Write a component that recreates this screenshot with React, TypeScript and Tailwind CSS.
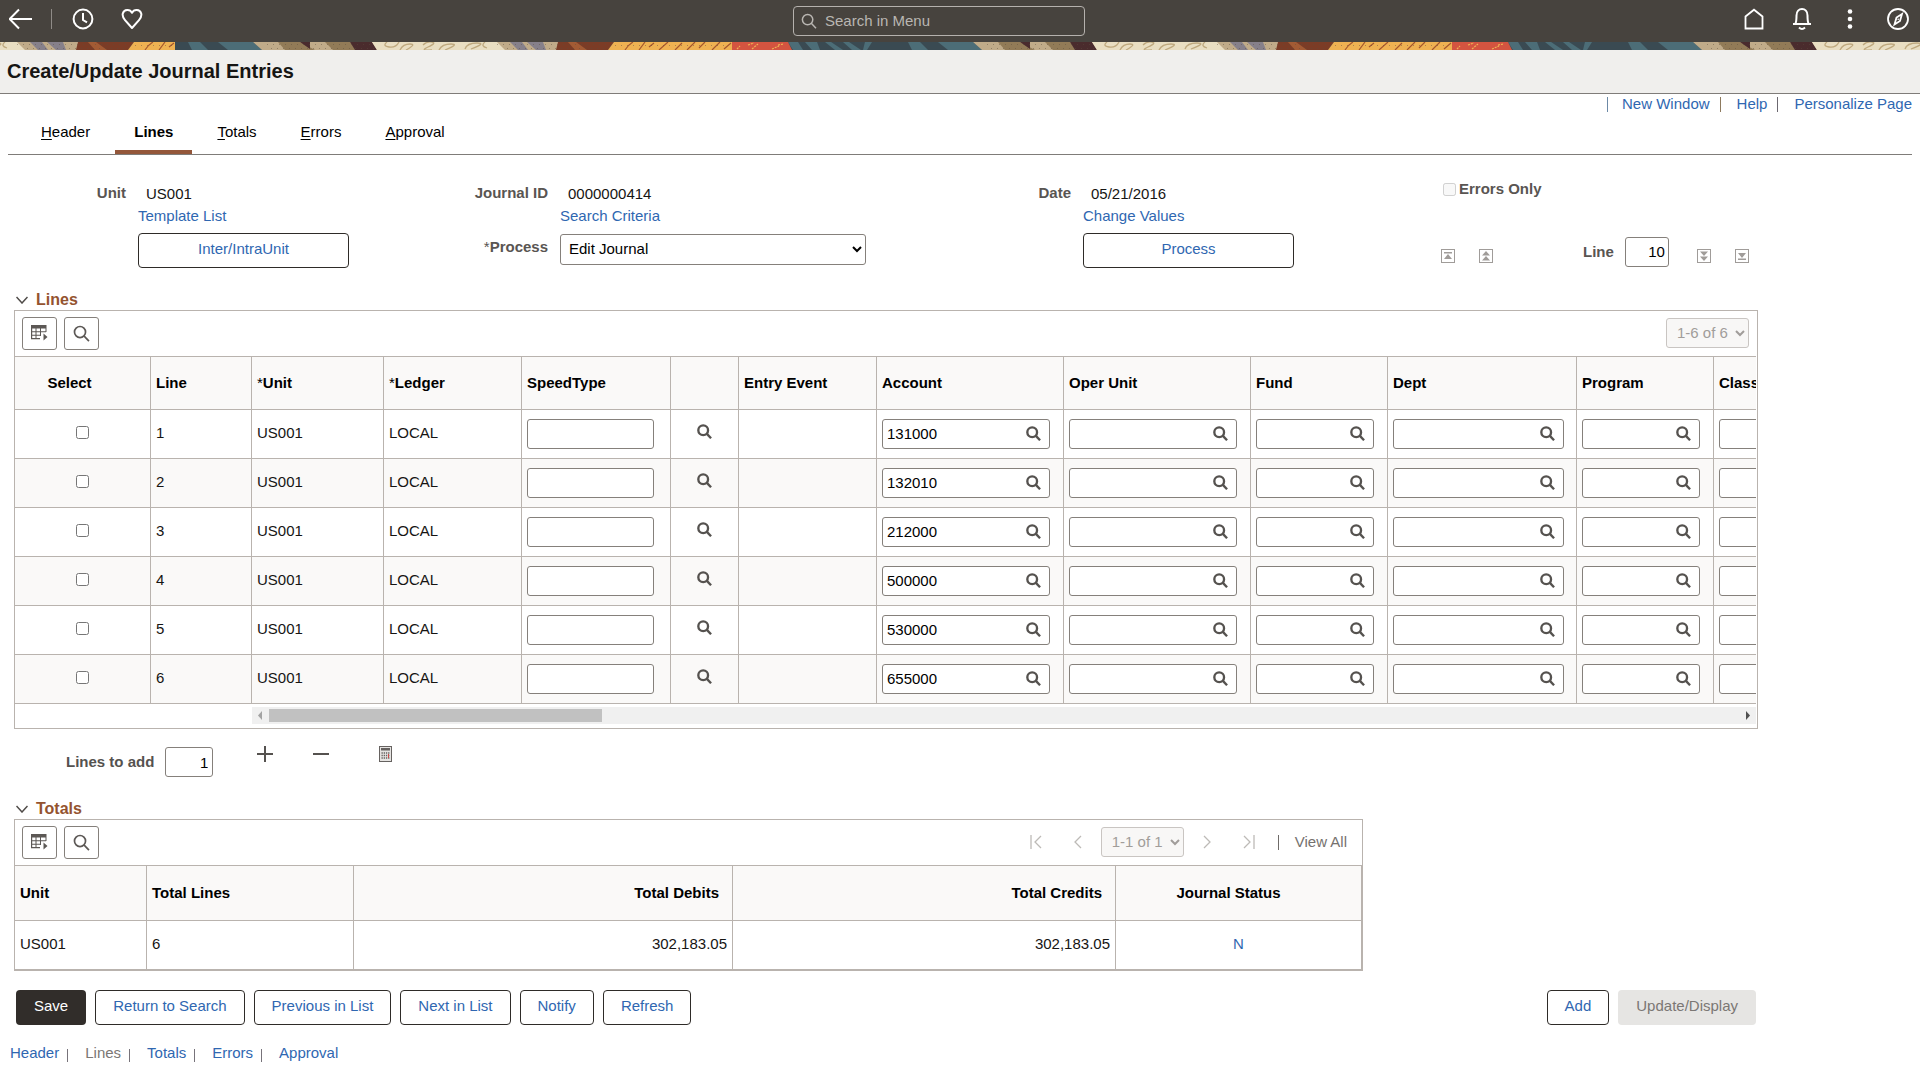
import { useState } from 'react';

const LINK = 'text-[#2f67b1] hover:underline';
const CELL = 'border-t border-r border-[#b9b3ae]';
const FIELD = 'rounded-[3px] border border-[#85807b] bg-white text-black';

const tabs = ['Header', 'Lines', 'Totals', 'Errors', 'Approval'];

const journalLines = [
  { line: 1, unit: 'US001', ledger: 'LOCAL', account: '131000' },
  { line: 2, unit: 'US001', ledger: 'LOCAL', account: '132010' },
  { line: 3, unit: 'US001', ledger: 'LOCAL', account: '212000' },
  { line: 4, unit: 'US001', ledger: 'LOCAL', account: '500000' },
  { line: 5, unit: 'US001', ledger: 'LOCAL', account: '530000' },
  { line: 6, unit: 'US001', ledger: 'LOCAL', account: '655000' },
];

const lookups = [
  { name: 'Account', width: 'w-[168px]' },
  { name: 'Oper Unit', width: 'w-[168px]' },
  { name: 'Fund', width: 'w-[118px]' },
  { name: 'Dept', width: 'w-[171px]' },
  { name: 'Program', width: 'w-[118px]' },
  { name: 'Class', width: 'w-[118px]' },
];

function Magnifier({ size = 16, stroke = 2 }: { size?: number; stroke?: number }) {
  return (
    <svg width={size} height={size} viewBox="0 0 16 16" fill="none" stroke="currentColor" strokeWidth={stroke}>
      <circle cx="6.6" cy="6.6" r="5.2" />
      <path d="M10.3 10.3 15 15.2" />
    </svg>
  );
}

function BannerTile({ id, x }: { id: string; x: number }) {
  return (
    <pattern id={id} x={x} y="0" width="720" height="8" patternUnits="userSpaceOnUse">
      <rect width="720" height="8" fill="#3a4a52" />
      <path fill="#4c6d77" d="M13 0h12l8 8H17zM43 0h35l9 8H53zM613 0h10l5 8h-10zM630 0h12l3 8h-8zM650 0h6l12 8h-8zM668 0h6l12 8h-9zM690 0h7l-5 8h-4z" />
      <path fill="#c0ab89" d="M78 0h130v8H87zM320 0h64v8h-56z" />
      <path fill="#927b57" d="M103 0h22l15 8h-30zM150 0h25l7 8h-24z" />
      <path fill="#4a2b2d" d="M125 0h10v7zM175 0h22l5 8h-22z" />
      <path fill="#e9dec2" d="M197 0h125l8 8H202z" />
      <path fill="#86808a" d="M335 0h12l6 8h-10zM352 0h16l3 8h-10z" />
      <path fill="#7b3c26" d="M383 0h56l-6 8h-52z" />
      <path fill="#a35b34" d="M393 0h8l11 8h-12z" />
      <path fill="#efb252" d="M439 0h118v8H433z" />
      <path fill="#d45440" d="M557 0h56l4 8h-60z" />
      <g fill="none" stroke="#bfa97f" strokeWidth="1.3">
        <path d="M212 0q-5 4 2 5t10-5M225 8q3-6 10-6t-4 6M248 3q4-4 9-3t-4 5 4 3M264 8q3-6 12-6t-6 6M290 7q2-6 12-6t-6 6M310 0q-5 4 2 6" />
      </g>
      <g fill="none" stroke="#a5562c" strokeWidth="1.2">
        <path d="M450 8q3-5 8-8M464 8l6-8M474 5l5-4M484 8l9-8M500 8l7-7M512 8l8-8M524 6l6-6M537 8l8-8M549 7l7-6" />
      </g>
      <g fill="none" stroke="#efb252" strokeWidth="1.2" strokeDasharray="2 1">
        <path d="M562 7l3-3M573 3l6-2M577 7l6-5M597 7l7-3M603 3l6-1" />
      </g>
      <g fill="none" stroke="#5b4b3c" strokeWidth="1" strokeDasharray="1 5" opacity="0.45">
        <path d="M92 2.5h105M96 6.5h104M322 2.5h112M332 6.5h100M440 3.5h112" />
      </g>
    </pattern>
  );
}

function Banner() {
  return (
    <div className="flex h-2">
      <svg width="175" height="8" className="shrink-0" aria-hidden="true">
        <defs>
          <BannerTile id="banner-start" x={-305} />
        </defs>
        <rect width="175" height="8" fill="url(#banner-start)" />
      </svg>
      <svg height="8" className="min-w-0 flex-1" aria-hidden="true">
        <defs>
          <BannerTile id="banner-repeat" x={0} />
        </defs>
        <rect width="100%" height="8" fill="url(#banner-repeat)" />
      </svg>
    </div>
  );
}

function TopBar() {
  return (
    <header className="flex h-[42px] items-center bg-[#47433e] text-white">
      <div className="flex flex-1 items-center pb-1 pl-[9px]">
        <button aria-label="Back">
          <svg width="24" height="22" viewBox="0 0 24 22" fill="none" stroke="currentColor" strokeWidth="2">
            <path d="M23 11H1M10 1.5.6 11l9.400 9.500" />
          </svg>
        </button>
        <span className="ml-[18px] h-5 w-px bg-[#8f8b87]" />
        <button aria-label="Recently visited" className="ml-5">
          <svg width="22" height="22" viewBox="0 0 22 22" fill="none" stroke="currentColor" strokeWidth="2">
            <circle cx="11" cy="11" r="9.4" />
            <path d="M11 5v7l4 2.4" />
          </svg>
        </button>
        <button aria-label="Favorites" className="ml-[27px]">
          <svg width="22" height="22" viewBox="0 0 22 22" fill="none" stroke="currentColor" strokeWidth="2" strokeLinejoin="round">
            <path d="M11 4.8C9 .8 3 1 1.8 5.5c-.7 2.7.4 4.5 2.2 6.6l7 7.9 7-7.9c1.800-2.100 2.900-3.900 2.200-6.600C19 1 13 .8 11 4.800z" />
          </svg>
        </button>
      </div>
      <label className="mr-10 flex h-[30px] w-[292px] items-center gap-2 rounded-[4px] border border-[#b5b1ad] px-[7px] text-[#b9b6b2]">
        <Magnifier size={16} stroke={1.5} />
        <input
          aria-label="Search in Menu"
          placeholder="Search in Menu"
          className="min-w-0 flex-1 bg-transparent text-[15px] outline-none placeholder:text-[#b9b6b2]"
        />
      </label>
      <div className="flex flex-1 items-center justify-end gap-[26px] pr-[11px] pb-1">
        <button aria-label="Home">
          <svg width="22" height="22" viewBox="0 0 22 22" fill="none" stroke="currentColor" strokeWidth="1.800">
            <path d="M2.500 20.500V8.500L11 1.700l8.500 6.800v12z" />
          </svg>
        </button>
        <button aria-label="Notifications">
          <svg width="22" height="24" viewBox="0 0 22 24" fill="none" stroke="currentColor" strokeWidth="2">
            <path d="M2 17h18M4.500 16.500c1-2 1-4 1-8 0-4 2.500-6.500 5.500-6.500s5.500 2.500 5.500 6.500c0 4 0 6 1 8M8 20.500q3 3 6 0" />
          </svg>
        </button>
        <button aria-label="Actions">
          <svg width="22" height="22" viewBox="0 0 22 22" fill="currentColor">
            <circle cx="11" cy="3.500" r="2.300" />
            <circle cx="11" cy="11" r="2.300" />
            <circle cx="11" cy="18.500" r="2.300" />
          </svg>
        </button>
        <button aria-label="NavBar">
          <svg width="22" height="24" viewBox="0 0 22 24" fill="none" stroke="currentColor" strokeWidth="1.800">
            <circle cx="11" cy="12" r="10" />
            <path d="m15 7-2 7-5.500 3.500 2-7z" />
            <circle cx="11.200" cy="12.200" r="0.800" fill="currentColor" stroke="none" />
          </svg>
        </button>
      </div>
    </header>
  );
}

function OutlineButton({ children, className = '' }: { children: string; className?: string }) {
  return (
    <button className={`h-[35px] rounded-[4px] border border-[#2e2b28] bg-white px-[17px] pb-1 text-[#2f67b1] ${className}`}>
      {children}
    </button>
  );
}

// Small framed arrows that jump between chunks of journal lines
function JumpButton({ label, d }: { label: string; d: string }) {
  return (
    <button aria-label={label} className="pt-2 text-[#a09c99]">
      <svg width="14" height="14" viewBox="0 0 14 14">
        <rect x="0.5" y="0.5" width="13" height="13" fill="none" stroke="currentColor" />
        <path d={d} fill="currentColor" />
      </svg>
    </button>
  );
}

function SectionTitle({ children }: { children: string }) {
  return (
    <h2 className="flex h-5 items-center text-base font-bold text-[#94532f]">
      <button aria-label={`Collapse ${children}`} className="mr-2 ml-0.5 text-[#4f4b48]">
        <svg width="12" height="8" viewBox="0 0 12 8" fill="none" stroke="currentColor" strokeWidth="1.500">
          <path d="M.5 1 6 7l5.500-6" />
        </svg>
      </button>
      {children}
    </h2>
  );
}

function GridTools() {
  const box = 'flex h-[33px] w-[35px] items-center justify-center rounded-[3px] border border-[#85807b] text-[#5c5855]';
  return (
    <div className="flex gap-[7px]">
      <button aria-label="Grid action menu" className={box}>
        <svg width="17" height="16" viewBox="0 0 17 16" fill="currentColor">
          <path d="M0 0h15.500v7h-1V3.500H1.200V13H9v1.200H0z" />
          <path d="M1 6.300h14v1H1zM1 9.800h9v1H1zM4.500 3h1v11h-1zM9 3h1v8H9zM12.500 8.500v7l4-3.500z" />
        </svg>
      </button>
      <button aria-label="Find" className={box}>
        <Magnifier size={17} stroke={1.600} />
      </button>
    </div>
  );
}

function LookupField({ label, value, width }: { label: string; value: string; width: string }) {
  return (
    <div className={`flex h-[30px] items-center ${FIELD} ${width}`}>
      <input aria-label={label} defaultValue={value} className="h-full min-w-0 flex-1 pb-px pl-1 outline-none" />
      <button aria-label={`Look up ${label}`} className="px-2 pb-0.5 text-[#55524f]">
        <Magnifier size={15} stroke={2.500} />
      </button>
    </div>
  );
}

function PagerSelect({ label, text }: { label: string; text: string }) {
  return (
    <select disabled aria-label={label} className="h-[30px] w-[83px] rounded-[3px] border border-[#c9c5c2] bg-[#f8f7f6] pb-0.5 pl-1.5 text-[#a19d9a]">
      <option>{text}</option>
    </select>
  );
}

function PagerButton({ label, d }: { label: string; d: string }) {
  return (
    <button disabled aria-label={label} className="flex w-[38px] justify-center text-[#bdbab7]">
      <svg width="12" height="14" viewBox="0 0 12 14" fill="none" stroke="currentColor" strokeWidth="1.300">
        <path d={d} />
      </svg>
    </button>
  );
}

function JournalFields() {
  const block = 'grid grid-cols-[126px_max-content] grid-rows-[22px_28px_35px] gap-x-3';
  const label = 'text-right leading-5 font-bold text-[#595552]';
  return (
    <section className="grid grid-cols-[422px_523px_496px_1fr] pt-7">
      <div className={block}>
        <span className={label}>Unit</span>
        <span className="pl-2 leading-[22px]">US001</span>
        <a href="#template" className={`col-start-2 leading-[22px] ${LINK}`}>Template List</a>
        <OutlineButton className="col-start-2 w-[211px]">Inter/IntraUnit</OutlineButton>
      </div>
      <div className={block}>
        <span className={label}>Journal ID</span>
        <span className="pl-2 leading-[22px]">0000000414</span>
        <a href="#criteria" className={`col-start-2 leading-[22px] ${LINK}`}>Search Criteria</a>
        <label htmlFor="process" className="text-right leading-7 font-bold text-[#595552]">
          <span className="font-normal">*</span>Process
        </label>
        <select id="process" className={`mt-px h-[31px] w-[306px] pb-0.5 pl-1 ${FIELD}`}>
          <option>Edit Journal</option>
        </select>
      </div>
      <div className={block}>
        <span className={label}>Date</span>
        <span className="pl-2 leading-[22px]">05/21/2016</span>
        <a href="#values" className={`col-start-2 leading-[22px] ${LINK}`}>Change Values</a>
        <OutlineButton className="col-start-2 w-[211px]">Process</OutlineButton>
      </div>
      <div className="grid grid-rows-[50px_35px] font-bold text-[#595552]">
        <label className="flex h-3 items-center gap-[3px] pl-0.5">
          <input type="checkbox" disabled className="size-[13px]" />
          Errors Only
        </label>
        <div className="flex items-center pt-0.5">
          <JumpButton label="First line" d="M3 3h8v1.500H3zM7 5l4 5H3z" />
          <span className="w-6" />
          <JumpButton label="Previous lines" d="M7 2l4 4.500H3zM7 7l4 4.500H3z" />
          <label htmlFor="goto-line" className="ml-[90px]">Line</label>
          <input id="goto-line" defaultValue="10" className={`mr-7 ml-[11px] h-[30px] w-11 px-[3px] text-right font-normal ${FIELD}`} />
          <JumpButton label="Next lines" d="M3 2.500h8L7 7zM3 7.500h8L7 12z" />
          <span className="w-6" />
          <JumpButton label="Last line" d="M3 4h8L7 9zM3 9.500h8V11H3z" />
        </div>
      </div>
    </section>
  );
}

function LinesGrid() {
  return (
    <div className="border border-[#b9b3ae] pr-px pb-1">
      <div className="flex h-[45px] items-center justify-between pr-[7px] pb-px pl-[7px]">
        <GridTools />
        <PagerSelect label="Line range" text="1-6 of 6" />
      </div>
      <div className="overflow-hidden">
        <table className="w-[1842px] table-fixed border-separate border-spacing-0">
          <colgroup>
            <col className="w-[136px]" />
            <col className="w-[101px]" />
            <col className="w-[132px]" />
            <col className="w-[138px]" />
            <col className="w-[149px]" />
            <col className="w-[68px]" />
            <col className="w-[138px]" />
            <col className="w-[187px]" />
            <col className="w-[187px]" />
            <col className="w-[137px]" />
            <col className="w-[189px]" />
            <col className="w-[137px]" />
            <col className="w-[143px]" />
          </colgroup>
          <thead className="bg-[#faf9f8] text-left text-black">
            <tr className="h-[53px]">
              <th className={`pr-[26px] text-center ${CELL}`}>Select</th>
              <th className={`pl-[5px] ${CELL}`}>Line</th>
              <th className={`pl-[5px] ${CELL}`}><span className="font-normal">*</span>Unit</th>
              <th className={`pl-[5px] ${CELL}`}><span className="font-normal">*</span>Ledger</th>
              <th className={`pl-[5px] ${CELL}`}>SpeedType</th>
              <th className={CELL} />
              <th className={`pl-[5px] ${CELL}`}>Entry Event</th>
              {lookups.map((f) => (
                <th key={f.name} className={`pl-[5px] ${CELL}`}>{f.name}</th>
              ))}
            </tr>
          </thead>
          <tbody className="[&>tr:last-child>td]:border-b">
            {journalLines.map((row) => (
              <tr key={row.line} className="h-[49px] even:bg-[#faf9f8] last:h-[50px]">
                <td className={`pb-[3px] text-center ${CELL}`}>
                  <input type="checkbox" aria-label={`Select line ${row.line}`} className="mx-auto block size-[13px]" />
                </td>
                <td className={`pb-[3px] pl-[5px] ${CELL}`}>{row.line}</td>
                <td className={`pb-[3px] pl-[5px] ${CELL}`}>{row.unit}</td>
                <td className={`pb-[3px] pl-[5px] ${CELL}`}>{row.ledger}</td>
                <td className={`pl-[5px] ${CELL}`}>
                  <input aria-label="SpeedType" className={`block h-[30px] w-[127px] px-1 ${FIELD}`} />
                </td>
                <td className={`pb-1.5 ${CELL}`}>
                  <button aria-label="Look up SpeedType" className="mx-auto block text-[#55524f]">
                    <Magnifier size={15} stroke={2.500} />
                  </button>
                </td>
                <td className={CELL} />
                {lookups.map((f) => (
                  <td key={f.name} className={`pl-[5px] ${CELL}`}>
                    <LookupField label={f.name} value={f.name === 'Account' ? row.account : ''} width={f.width} />
                  </td>
                ))}
              </tr>
            ))}
          </tbody>
        </table>
      </div>
      <div className="mt-[3px] ml-[237px] flex h-[17px] items-center bg-[#f0f0f0]">
        <svg width="17" height="9" viewBox="0 0 17 9" className="shrink-0">
          <path d="M10 0v9L6 4.500z" fill="#a3a3a3" />
        </svg>
        <div className="h-[13px] w-[333px] bg-[#c1c1c1]" />
        <svg width="17" height="9" viewBox="0 0 17 9" className="ml-auto shrink-0">
          <path d="M7 0v9l4-4.500z" fill="#505050" />
        </svg>
      </div>
    </div>
  );
}

function LinesToAdd() {
  return (
    <div className="mt-[18px] flex h-[30px] items-center pl-[52px] text-[#55524f]">
      <label htmlFor="lines-to-add" className="font-bold">Lines to add</label>
      <input id="lines-to-add" defaultValue="1" className={`ml-[11px] h-[30px] w-12 px-1 text-right ${FIELD}`} />
      <div className="flex items-center pb-4">
        <button aria-label="Insert lines" className="ml-11">
          <svg width="16" height="16" viewBox="0 0 16 16" stroke="currentColor" strokeWidth="2">
            <path d="M8 0v16M0 8h16" />
          </svg>
        </button>
        <button aria-label="Delete lines" className="ml-10">
          <svg width="16" height="16" viewBox="0 0 16 16" stroke="currentColor" strokeWidth="2">
            <path d="M0 8h16" />
          </svg>
        </button>
        <button aria-label="Calculate amounts" className="ml-[50px]">
          <svg width="13" height="16" viewBox="0 0 13 16">
            <rect x="0.5" y="0.5" width="12" height="15" fill="#e6e4e2" stroke="#666260" />
            <rect x="2" y="2" width="9" height="2.500" fill="#666260" />
            <path d="M2.500 7h8M2.500 9.500h8M2.500 12h8" stroke="#666260" strokeWidth="1.300" strokeDasharray="1.300 0.900" />
            <path d="M9.500 8v4" stroke="#cf4a4a" />
          </svg>
        </button>
      </div>
    </div>
  );
}

function TotalsGrid() {
  return (
    <div className="w-fit border border-[#b9b3ae]">
      <div className="flex h-[45px] items-center justify-between pr-[15px] pb-px pl-[7px]">
        <GridTools />
        <div className="flex items-center gap-1">
          <PagerButton label="First" d="M1 0v14M11 1 5 7l6 6" />
          <PagerButton label="Previous" d="M9 1 3 7l6 6" />
          <PagerSelect label="Totals range" text="1-1 of 1" />
          <PagerButton label="Next" d="m3 1 6 6-6 6" />
          <PagerButton label="Last" d="m1 1 6 6-6 6M11 0v14" />
          <span className="ml-1.5 h-[15px] w-px bg-[#6f6b68]" />
          <button className="ml-3 text-[#75716e]">View All</button>
        </div>
      </div>
      <table className="w-[1347px] table-fixed border-separate border-spacing-0">
        <colgroup>
          <col className="w-[132px]" />
          <col className="w-[207px]" />
          <col className="w-[379px]" />
          <col className="w-[383px]" />
          <col className="w-[246px]" />
        </colgroup>
        <thead className="bg-[#faf9f8] text-left text-black">
          <tr className="h-[55px]">
            <th className={`pl-[5px] ${CELL}`}>Unit</th>
            <th className={`pl-[5px] ${CELL}`}>Total Lines</th>
            <th className={`pr-[13px] text-right ${CELL}`}>Total Debits</th>
            <th className={`pr-[13px] text-right ${CELL}`}>Total Credits</th>
            <th className={`pr-5 text-center ${CELL}`}>Journal Status</th>
          </tr>
        </thead>
        <tbody className="[&_td]:border-b [&_td]:pb-0.5">
          <tr className="h-[50px]">
            <td className={`pl-[5px] ${CELL}`}>US001</td>
            <td className={`pl-[5px] ${CELL}`}>6</td>
            <td className={`pr-[5px] text-right ${CELL}`}>302,183.05</td>
            <td className={`pr-[5px] text-right ${CELL}`}>302,183.05</td>
            <td className={`text-center ${CELL}`}>
              <a href="#status" className={LINK}>N</a>
            </td>
          </tr>
        </tbody>
      </table>
    </div>
  );
}

export default function App() {
  const [active, setActive] = useState('Lines');

  return (
    <div className="min-h-screen bg-white font-['Liberation_Sans',Arial,sans-serif] text-[15px] leading-5 text-[#161513]">
      <TopBar />
      <Banner />
      <div className="flex h-11 items-center border-b border-[#7f7c79] bg-[#f0efed] px-[7px] pb-0.5">
        <h1 className="text-xl font-bold">Create/Update Journal Entries</h1>
      </div>

      <div className="flex h-5 items-center justify-end gap-[10px] px-2">
        <span className="mr-1 h-[15px] w-px bg-[#6c89a6]" />
        <a href="#new" className={LINK}>New Window</a>
        <span className="mr-1.5 h-[15px] w-px bg-[#8d7a5e]" />
        <a href="#help" className={LINK}>Help</a>
        <span className="mr-1.5 h-[15px] w-px bg-[#6c6870]" />
        <a href="#personalize" className={LINK}>Personalize Page</a>
      </div>

      <nav className="mx-2 flex h-[41px] gap-1.5 border-b border-[#7f7c79] pl-[14px]">
        {tabs.map((t) => (
          <button
            key={t}
            onClick={() => setActive(t)}
            className={`border-b-4 px-[19px] text-black ${
              t === active ? 'border-[#94573a] font-bold' : 'border-transparent'
            }`}
          >
            {t === active ? t : <><span className="underline underline-offset-2">{t[0]}</span>{t.slice(1)}</>}
          </button>
        ))}
      </nav>

      <JournalFields />

      <main className="mt-[22px] mr-[162px] ml-[14px]">
        <SectionTitle>Lines</SectionTitle>
        <LinesGrid />
        <LinesToAdd />
        <div className="h-[22px]" />
        <SectionTitle>Totals</SectionTitle>
        <TotalsGrid />

        <div className="mt-[19px] flex gap-[9px] pr-0.5 pl-0.5">
          <button className="h-[35px] rounded-[4px] bg-[#312d2a] px-[18px] pb-1 text-white">Save</button>
          <OutlineButton>Return to Search</OutlineButton>
          <OutlineButton>Previous in List</OutlineButton>
          <OutlineButton>Next in List</OutlineButton>
          <OutlineButton>Notify</OutlineButton>
          <OutlineButton>Refresh</OutlineButton>
          <OutlineButton className="ml-auto">Add</OutlineButton>
          <button disabled className="h-[35px] rounded-[4px] bg-[#e6e5e3] px-[18px] pb-1 text-[#7b7774]">Update/Display</button>
        </div>
      </main>

      <div className="mt-[18px] flex items-center gap-2 pl-[10px]">
        {tabs.map((t, i) => (
          <span key={t} className="flex items-center gap-2">
            {i > 0 && <span className="mt-1 mr-[9px] h-[13px] w-px bg-[#77737a]" />}
            <a href={`#${t.toLowerCase()}`} className={t === active ? 'text-[#7b7774]' : LINK}>{t}</a>
          </span>
        ))}
      </div>
    </div>
  );
}
